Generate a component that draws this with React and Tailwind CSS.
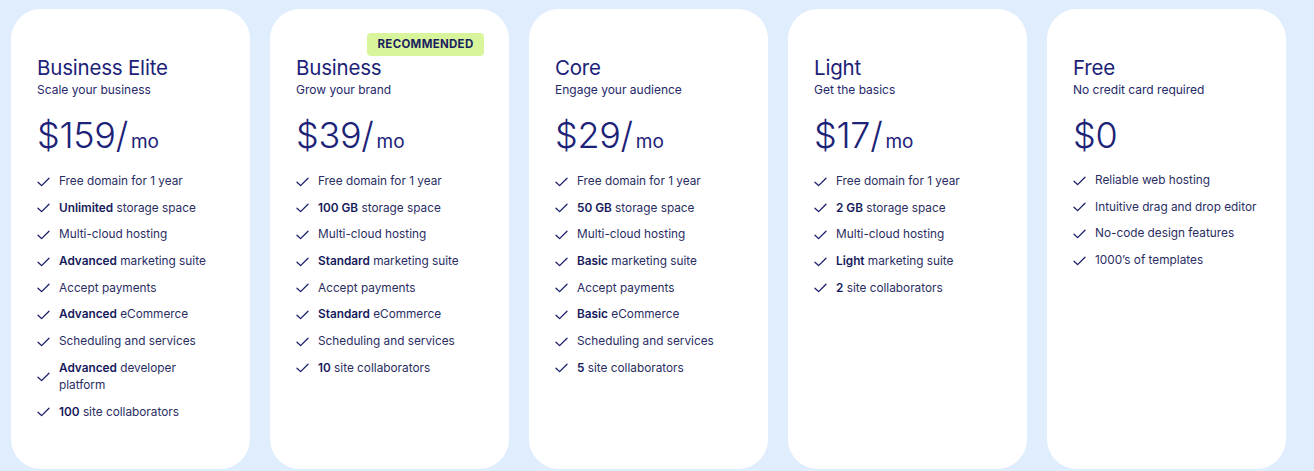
import React from "react";

const plans = [
  {
    name: "Business Elite",
    sub: "Scale your business",
    price: "$159",
    mo: true,
    features: [
      [null, "Free domain for 1 year"],
      ["Unlimited", " storage space"],
      [null, "Multi-cloud hosting"],
      ["Advanced", " marketing suite"],
      [null, "Accept payments"],
      ["Advanced", " eCommerce"],
      [null, "Scheduling and services"],
      ["Advanced", " developer platform"],
      ["100", " site collaborators"],
    ],
  },
  {
    name: "Business",
    sub: "Grow your brand",
    price: "$39",
    mo: true,
    badge: true,
    features: [
      [null, "Free domain for 1 year"],
      ["100 GB", " storage space"],
      [null, "Multi-cloud hosting"],
      ["Standard", " marketing suite"],
      [null, "Accept payments"],
      ["Standard", " eCommerce"],
      [null, "Scheduling and services"],
      ["10", " site collaborators"],
    ],
  },
  {
    name: "Core",
    sub: "Engage your audience",
    price: "$29",
    mo: true,
    features: [
      [null, "Free domain for 1 year"],
      ["50 GB", " storage space"],
      [null, "Multi-cloud hosting"],
      ["Basic", " marketing suite"],
      [null, "Accept payments"],
      ["Basic", " eCommerce"],
      [null, "Scheduling and services"],
      ["5", " site collaborators"],
    ],
  },
  {
    name: "Light",
    sub: "Get the basics",
    price: "$17",
    mo: true,
    features: [
      [null, "Free domain for 1 year"],
      ["2 GB", " storage space"],
      [null, "Multi-cloud hosting"],
      ["Light", " marketing suite"],
      ["2", " site collaborators"],
    ],
  },
  {
    name: "Free",
    sub: "No credit card required",
    price: "$0",
    mo: false,
    features: [
      [null, "Reliable web hosting"],
      [null, "Intuitive drag and drop editor"],
      [null, "No-code design features"],
      [null, "1000’s of templates"],
    ],
  },
];

function Check() {
  return (
    <svg width="13" height="10" viewBox="0 0 13 10" className="shrink-0" fill="none">
      <path d="M1 5.2 L4.6 8.6 L12 1.2" stroke="#1b1f6b" strokeWidth="1.3" strokeLinecap="round" strokeLinejoin="round" />
    </svg>
  );
}

function Card({ p }) {
  return (
    <div className="relative w-[239px] h-[460px] shrink-0 bg-white rounded-[30px] pt-[47px] pl-[26px] pr-[20px]">
      {p.badge && (
        <div className="absolute top-[24px] right-[25px] h-[23px] px-[10.5px] flex items-center rounded-[4px] bg-[#d9f59b] text-[11.5px] font-bold tracking-[0.3px] text-[#1b1f5e]">
          RECOMMENDED
        </div>
      )}
      <div className="text-[20.5px] leading-[24px] text-[#1c2277] tracking-[-0.2px]">{p.name}</div>
      <div className="text-[12px] leading-[17px] text-[#25286a] mt-px">{p.sub}</div>
      <div className="flex items-baseline mt-[15px] h-[44px] text-[#1c2277]">
        <span className="text-[36px] leading-[44px] font-light tracking-[-0.3px]">
          {p.price}
          {p.mo ? "/" : ""}
        </span>
        {p.mo && <span className="text-[19px] ml-[3px] font-normal">mo</span>}
      </div>
      <ul className={`flex flex-col gap-[9.7px] ${p.mo ? "mt-[16px]" : "mt-[15px]"}`}>
        {p.features.map(([b, t], i) => (
          <li key={i} className="flex items-center gap-[9px] text-[11.8px] leading-[17px] text-[#2a2d63]">
            <Check />
            <span className={b === "Advanced" && t === " developer platform" ? "w-[130px]" : ""}>
              {b && <b className="font-semibold text-[#161a5c]">{b}</b>}
              {t}
            </span>
          </li>
        ))}
      </ul>
    </div>
  );
}

export default function App() {
  return (
    <div
      className="w-[1314px] h-[471px] bg-[#e0edfd] pt-[9px] pl-[11px] flex gap-[20px] overflow-hidden"
      style={{ fontFamily: "Inter, 'Noto Sans', sans-serif" }}
    >
      {plans.map((p) => (
        <Card key={p.name} p={p} />
      ))}
    </div>
  );
}
